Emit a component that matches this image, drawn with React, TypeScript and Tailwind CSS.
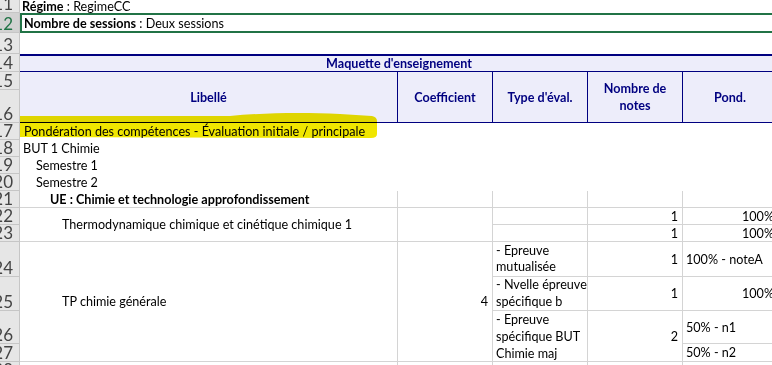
import React from "react";

// row numbers on the left edge, heights match the grid template below
const rowHeads = [
    { n: 11, h: "h-[13px]" },
    { n: 12, h: "h-[20px]", active: true },
    { n: 13, h: "h-[21px]" },
    { n: 14, h: "h-[18px]" },
    { n: 15, h: "h-[18px]" },
    { n: 16, h: "h-[33px]" },
    { n: 17, h: "h-[17px]" },
    { n: 18, h: "h-[17px]" },
    { n: 19, h: "h-[17px]" },
    { n: 20, h: "h-[17px]" },
    { n: 21, h: "h-[17px]" },
    { n: 22, h: "h-[17px]" },
    { n: 23, h: "h-[17px]" },
    { n: 24, h: "h-[35px]" },
    { n: 25, h: "h-[34px]" },
    { n: 26, h: "h-[33px]" },
    { n: 27, h: "h-[18px]" },
    { n: 28, h: "h-[17px]" },
];

const grid = "border-r border-b border-[#d4d4d4]";
const head =
    "flex items-center justify-center row-span-2 bg-[#ededfa] border-r border-b border-[#000080] font-bold text-[#000080] text-center leading-[17px]";

export default function App() {
    return (
        <div className="relative h-[365px] w-[772px] overflow-hidden bg-white font-['Lato',sans-serif] text-[12.6px] text-black">
            <div className="flex">
                {/* row headers */}
                <div className="flex w-[20px] shrink-0 flex-col">
                    {rowHeads.map((r) => (
                        <div
                            key={r.n}
                            className={`${r.h} flex shrink-0 items-end justify-end overflow-hidden border-r border-b border-[#c6c6c6] pr-[6px] pb-[1px] text-[17px] leading-[14px] tabular-nums ${
                                r.active ? "bg-[#d2d2d2] text-[#217346]" : "bg-[#e6e6e6] text-[#444]"
                            }`}
                        >
                            <span className="whitespace-nowrap">{r.n}</span>
                        </div>
                    ))}
                </div>

                {/* sheet */}
                <div className="grid shrink-0 grid-cols-[378px_95px_95px_95px_95px] grid-rows-[13px_20px_21px_18px_18px_33px_17px_17px_17px_17px_17px_17px_17px_35px_34px_33px_18px_17px] whitespace-nowrap leading-[17px]">
                    {/* 11 */}
                    <div className="col-span-5 flex items-end pl-[2px] leading-[13px]">
                        <b>Régime</b>&nbsp;: RegimeCC
                    </div>
                    {/* 12 */}
                    <div className="col-span-5 flex items-center border-2 border-[#217346] pl-[2px]">
                        <b>Nombre de sessions</b>&nbsp;: Deux sessions
                    </div>
                    {/* 13 */}
                    <div className="col-span-5" />
                    {/* 14 */}
                    <div className="col-span-5 flex items-center justify-center border-t-2 border-b border-[#000080] bg-[#ededfa] font-bold text-[#000080]">
                        Maquette d'enseignement
                    </div>
                    {/* 15-16 */}
                    <div className={head}>Libellé</div>
                    <div className={head}>Coefficient</div>
                    <div className={head}>Type d'éval.</div>
                    <div className={head}>
                        Nombre de
                        <br />
                        notes
                    </div>
                    <div className={head}>Pond.</div>
                    {/* 17-20 */}
                    <div className="col-span-5 flex items-center pl-[4px]">
                        Pondération des compétences - Évaluation initiale / principale
                    </div>
                    <div className="col-span-5 flex items-center pl-[3px]">BUT 1 Chimie</div>
                    <div className="col-span-5 flex items-center pl-[16px]">Semestre 1</div>
                    <div className="col-span-5 flex items-center pl-[16px]">Semestre 2</div>
                    {/* 21 */}
                    <div className={`${grid} flex items-center pl-[30px] font-bold`}>
                        UE : Chimie et technologie approfondissement
                    </div>
                    <div className={grid} />
                    <div className={grid} />
                    <div className={grid} />
                    <div className={grid} />
                    {/* 22-23 */}
                    <div className={`${grid} row-span-2 flex items-center pl-[42px]`}>
                        Thermodynamique chimique et cinétique chimique 1
                    </div>
                    <div className={`${grid} row-span-2`} />
                    <div className={grid} />
                    <div className={`${grid} flex items-center justify-end pr-[4px]`}>1</div>
                    <div className={`${grid} flex items-center justify-end pr-[3px]`}>100%</div>
                    <div className={grid} />
                    <div className={`${grid} flex items-center justify-end pr-[4px]`}>1</div>
                    <div className={`${grid} flex items-center justify-end pr-[3px]`}>100%</div>
                    {/* 24-27 */}
                    <div className={`${grid} row-span-4 flex items-center pl-[42px]`}>TP chimie générale</div>
                    <div className={`${grid} row-span-4 flex items-center justify-end pr-[4px]`}>4</div>
                    <div className={`${grid} flex items-center pl-[3px] leading-[16.5px]`}>
                        - Epreuve
                        <br />
                        mutualisée
                    </div>
                    <div className={`${grid} flex items-center justify-end pr-[4px]`}>1</div>
                    <div className={`${grid} flex items-center pl-[3px]`}>100% - noteA</div>
                    <div className={`${grid} flex items-center pl-[3px] leading-[16.5px]`}>
                        - Nvelle épreuve
                        <br />
                        spécifique b
                    </div>
                    <div className={`${grid} flex items-center justify-end pr-[4px]`}>1</div>
                    <div className={`${grid} flex items-center justify-end pr-[3px]`}>100%</div>
                    <div className={`${grid} row-span-2 flex items-center pl-[3px]`}>
                        - Epreuve
                        <br />
                        spécifique BUT
                        <br />
                        Chimie maj
                    </div>
                    <div className={`${grid} row-span-2 flex items-center justify-end pr-[4px]`}>2</div>
                    <div className={`${grid} flex items-center pl-[3px]`}>50% - n1</div>
                    <div className={`${grid} flex items-center pl-[3px]`}>50% - n2</div>
                    {/* 28 */}
                    <div className={grid} />
                    <div className={grid} />
                    <div className={grid} />
                    <div className={grid} />
                    <div className={grid} />
                </div>
            </div>

            {/* marker highlight drawn over the sheet */}
            <svg className="pointer-events-none absolute left-0 top-0 mix-blend-multiply" width="772" height="365">
                <path
                    d="M20 116 L230 116 C262 113 300 112 340 114 L372 116 Q377 117 377 121 L377 134 Q377 138 371 138 L20 137 Z"
                    fill="#f0e600"
                />
            </svg>
        </div>
    );
}
